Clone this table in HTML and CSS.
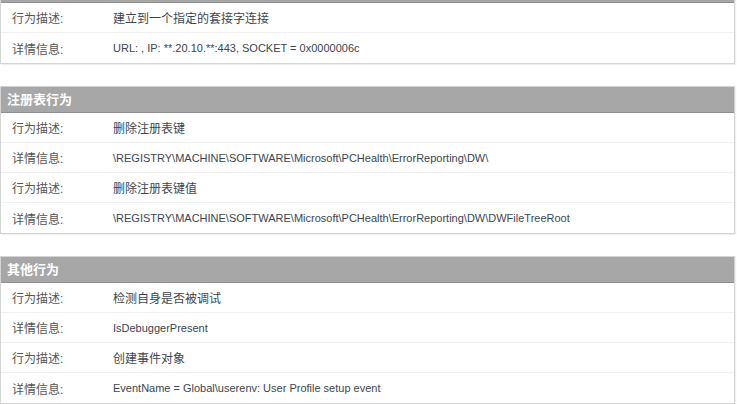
FILE: index.html
```html
<!DOCTYPE html>
<html lang="zh-CN">
<head>
  <meta charset="UTF-8" />
  <title>行为分析</title>
  <link rel="stylesheet" href="styles.css">
</head>
<body>

<div class="panel first">
  <div class="panel-title"></div>
  <div class="row"><span class="label">行为描述:</span><span class="value">建立到一个指定的套接字连接</span></div>
  <div class="row"><span class="label">详情信息:</span><span class="value latin">URL: , IP: **.20.10.**:443, SOCKET = 0x0000006c</span></div>
</div>

<div class="panel">
  <div class="panel-title">注册表行为</div>
  <div class="row"><span class="label">行为描述:</span><span class="value">删除注册表键</span></div>
  <div class="row"><span class="label">详情信息:</span><span class="value latin">\REGISTRY\MACHINE\SOFTWARE\Microsoft\PCHealth\ErrorReporting\DW\</span></div>
  <div class="row"><span class="label">行为描述:</span><span class="value">删除注册表键值</span></div>
  <div class="row"><span class="label">详情信息:</span><span class="value latin">\REGISTRY\MACHINE\SOFTWARE\Microsoft\PCHealth\ErrorReporting\DW\DWFileTreeRoot</span></div>
</div>

<div class="panel">
  <div class="panel-title">其他行为</div>
  <div class="row"><span class="label">行为描述:</span><span class="value">检测自身是否被调试</span></div>
  <div class="row"><span class="label">详情信息:</span><span class="value latin">IsDebuggerPresent</span></div>
  <div class="row"><span class="label">行为描述:</span><span class="value">创建事件对象</span></div>
  <div class="row"><span class="label">详情信息:</span><span class="value latin">EventName = Global\userenv: User Profile setup event</span></div>
</div>

</body>
</html>
```

FILE: styles.css
```css
* { margin: 0; padding: 0; box-sizing: border-box; }
body { background: #fff; font-family: "Liberation Sans", "Noto Sans CJK SC", sans-serif; font-size: 12px; color: #444; overflow: hidden; }
.panel { width: 735px; border: 1px solid #d4d4d4; margin-bottom: 22px; background: #fff; box-shadow: 1px 1px 1px rgba(0,0,0,0.06); }
.panel.first { margin-top: -24px; }
.panel-title { height: 26px; line-height: 25px; background: #a7a7a7; border-bottom: 1px solid #8e8e8e; color: #fff; font-weight: bold; font-size: 13px; padding-left: 6px; }
.row { display: flex; height: 30px; align-items: center; border-bottom: 1px solid #f0f0f0; }
.row:last-child { border-bottom: none; }
.label { width: 112px; padding-left: 11px; color: #555; flex-shrink: 0; }
.value { color: #3c4650; white-space: nowrap; }
.value.latin { font-size: 11px; }
```
